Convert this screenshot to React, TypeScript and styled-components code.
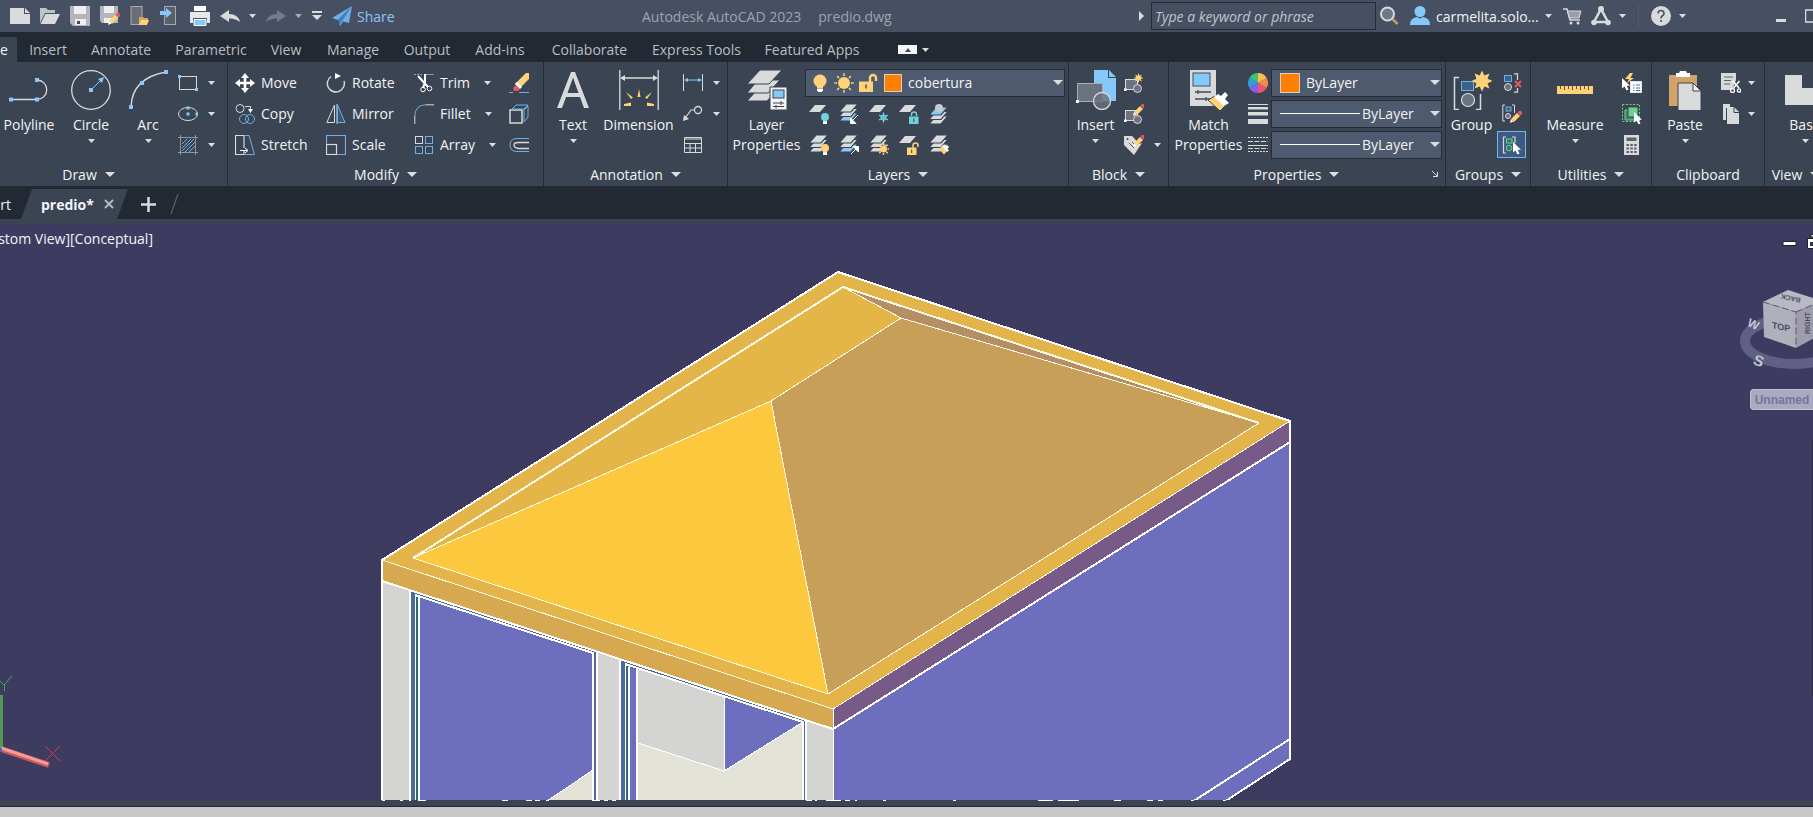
import React from "react";
import styled, { createGlobalStyle, css } from "styled-components";

const c = {
  title: "#475063",
  dark: "#222932",
  panel: "#3b4453",
  field: "#4e5a6e",
  line: "#252c37",
  text: "#f2f3f5",
  muted: "#b9bdc4",
  grey: "#d9dadc",
  blue: "#85c9fb",
  edge: "#6fb0e4",
  yellow: "#ffd27a",
  teal: "#6fd3dc",
  red: "#e8575f",
  green: "#6fd08f",
  canvas: "#3d3c60",
};

const GlobalStyle = createGlobalStyle`
  * { box-sizing: border-box; }
  body { margin: 0; background: ${c.canvas}; }
  body, button, input, select { font-family: "Open Sans", "Noto Sans", sans-serif; font-size: 14px; }
  button { border: 0; padding: 0; background: none; color: inherit; cursor: pointer; }
  svg { display: block; flex: none; }
`;

const Page = styled.div`
  display: flex;
  flex-direction: column;
  min-height: 100vh;
  overflow: hidden;
  color: ${c.text};
`;

/* ---------- title bar ---------- */

const TitleBar = styled.header`
  display: flex;
  align-items: center;
  height: 32px;
  background: ${c.title};
`;
const QuickAccess = styled.div`
  display: flex;
  align-items: center;
  gap: 10px;
  padding-left: 10px;
`;
const IconButton = styled.button`
  display: flex;
  align-items: center;
  justify-content: center;
  flex: none;
`;
const SplitIcon = styled.div`
  display: flex;
  align-items: center;
  gap: 9px;
`;
const ShareButton = styled.button`
  display: flex;
  align-items: center;
  gap: 5px;
  color: #8cc6f2;
`;
const WindowTitle = styled.div`
  flex: 1;
  display: flex;
  justify-content: center;
  gap: 17px;
  white-space: nowrap;
  color: #9ea3ae;
`;
const TitleTools = styled.div`
  display: flex;
  align-items: center;
  flex: none;
`;
const SearchBox = styled.input`
  width: 225px;
  height: 28px;
  margin: 0 4px 0 7px;
  padding: 0 3px;
  border: 1px solid ${c.line};
  background: ${c.title};
  color: ${c.text};
  font-style: italic;
  &::placeholder { color: #c0c4cc; opacity: 1; }
`;
const UserButton = styled.button`
  display: flex;
  align-items: center;
  gap: 6px;
  width: 140px;
  margin: 0 13px 0 10px;
`;
const UserName = styled.span`
  flex: 1;
  text-align: left;
  white-space: nowrap;
`;
const ToolGroup = styled.div`
  display: flex;
  align-items: center;
  gap: 8px;
`;
const Divider = styled.span`
  width: 1px;
  height: 24px;
  margin: 0 12px;
  background: #525b6d;
`;
const WindowButtons = styled.div`
  display: flex;
  gap: 18px;
  width: 37px;
  margin-left: 90px;
  overflow: hidden;
`;

/* ---------- ribbon tabs ---------- */

const RibbonTabs = styled.nav`
  display: flex;
  align-items: flex-end;
  height: 30px;
  background: ${c.dark};
  color: ${c.muted};
`;
const RibbonTab = styled.button<{ $w: number; $active?: boolean }>`
  flex: none;
  width: ${(p) => p.$w}px;
  height: 25px;
  white-space: nowrap;
  ${(p) =>
    p.$active &&
    css`
      margin-right: 1px;
      padding-right: 12px;
      background: ${c.panel};
      color: ${c.text};
      text-align: right;
    `}
`;
const RibbonToggle = styled.div`
  display: flex;
  align-items: center;
  gap: 5px;
  height: 25px;
  margin-left: 26px;
`;
const ToggleBox = styled.button`
  display: flex;
  align-items: center;
  justify-content: center;
  width: 19px;
  height: 9px;
  background: #f5f6f7;
`;

/* ---------- ribbon ---------- */

const RibbonBar = styled.div`
  display: flex;
  height: 124px;
  overflow: hidden;
  background: ${c.panel};
`;
const PanelBox = styled.section<{ $w: number }>`
  display: flex;
  flex-direction: column;
  flex: none;
  width: ${(p) => p.$w}px;
  border-right: 1px solid ${c.line};
`;
const PanelBody = styled.div<{ $pad?: number }>`
  display: flex;
  height: 100px;
  padding: 5px 0 0 ${(p) => p.$pad ?? 0}px;
`;
const PanelTitle = styled.div<{ $cut?: number }>`
  display: flex;
  align-items: center;
  justify-content: center;
  gap: 8px;
  height: 24px;
  padding-right: ${(p) => p.$cut ?? 0}px;
`;
const TitleButton = styled.button`
  display: flex;
  align-items: center;
  gap: 8px;
  white-space: nowrap;
`;
const Launcher = styled.button`
  margin-right: 7px;
  padding: 0;
`;
const LaunchTitle = styled(TitleButton)`
  flex: 1;
  justify-content: center;
`;
const BigBox = styled.button<{ $w: number }>`
  display: flex;
  flex-direction: column;
  align-items: center;
  flex: none;
  width: ${(p) => p.$w}px;
  height: 92px;
  padding-top: 3px;
  line-height: 20px;
`;
const BigLabel = styled.span`
  display: block;
  margin: 5px 0 4px;
  white-space: pre;
  text-align: center;
`;
const Column = styled.div<{ $w?: number; $pad?: number }>`
  display: flex;
  flex-direction: column;
  flex: none;
  width: ${(p) => (p.$w ? p.$w + "px" : "auto")};
  padding-left: ${(p) => p.$pad ?? 0}px;
`;
const Row = styled.div<{ $gap?: number }>`
  display: flex;
  align-items: center;
  gap: ${(p) => p.$gap ?? 10}px;
  height: 31px;
`;
const Command = styled.button`
  display: flex;
  align-items: center;
  gap: 6px;
  white-space: nowrap;
`;
const Combo = styled.label<{ $w: number; $tight?: boolean }>`
  display: flex;
  align-items: center;
  gap: ${(p) => (p.$tight ? 4 : 6)}px;
  width: ${(p) => p.$w}px;
  height: 28px;
  padding: 0 1px 0 ${(p) => (p.$tight ? 4 : 8)}px;
  border: 1px solid ${c.line};
  background: ${c.field};
`;
const ComboSelect = styled.select`
  appearance: none;
  flex: 1;
  min-width: 0;
  height: 26px;
  padding: 0;
  border: 0;
  background: transparent;
  color: ${c.text};
`;
const Swatch = styled.span<{ $size: number }>`
  flex: none;
  width: ${(p) => p.$size}px;
  height: ${(p) => p.$size}px;
  margin: 0 ${(p) => 20 - p.$size}px;
  border: 1px solid #d8cfc6;
  background: #ff8000;
`;
const LineSample = styled.span`
  flex: none;
  width: 80px;
  height: 1px;
  margin-right: -4px;
  background: #fff;
`;
const ToggleButton = styled.button`
  display: flex;
  align-items: center;
  justify-content: center;
  width: 29px;
  height: 27px;
  border: 1px solid #73b8f0;
  background: #3e5a80;
`;
const Cell = styled.div`
  display: flex;
  align-items: center;
  justify-content: center;
  width: 29px;
  height: 31px;
`;

/* ---------- file tabs ---------- */

const FileTabs = styled.nav`
  display: flex;
  align-items: flex-end;
  height: 33px;
  background: ${c.dark};
`;
const StartTab = styled.button`
  width: 21px;
  height: 30px;
  padding-right: 10px;
  text-align: right;
`;
const FileTab = styled.div`
  display: flex;
  align-items: center;
  justify-content: space-between;
  width: 107px;
  height: 30px;
  padding: 0 14px 0 20px;
  background: ${c.panel};
  clip-path: polygon(11px 0, 100% 0, calc(100% - 11px) 100%, 0 100%);
  font-weight: 700;
`;
const NewTab = styled(IconButton)`
  gap: 14px;
  height: 30px;
  margin-left: 13px;
`;

/* ---------- drawing area ---------- */

const Strip = styled.div<{ $h: number; $line?: boolean }>`
  height: ${(p) => p.$h}px;
  background: ${c.panel};
  border-bottom: ${(p) => (p.$line ? `1px solid ${c.dark}` : "0")};
`;
const Viewport = styled.main`
  position: relative;
  flex: 1;
  min-height: 320px;
  background: ${c.canvas};
  overflow: hidden;
`;
const Scene = styled.svg`
  position: absolute;
  inset: 0;
  width: 100%;
  height: 100%;
`;
const ViewLabel = styled.button`
  position: absolute;
  top: 4px;
  left: 0;
  display: flex;
  justify-content: flex-end;
  width: 153px;
  line-height: 22px;
  white-space: nowrap;
`;
const Navigation = styled.aside`
  position: absolute;
  top: 10px;
  right: 0;
  display: flex;
  flex-direction: column;
  align-items: flex-end;
  width: 76px;
`;
const NamedView = styled.button`
  width: 63px;
  height: 21px;
  border: 1px solid #c3c2d4;
  border-right: 0;
  border-radius: 4px 0 0 4px;
  background: #aaa9c2;
  color: #77769a;
  font: 700 12px "Liberation Sans", sans-serif;
`;
const Footer = styled.footer`
  height: 10px;
  background: #c8c8c8;
`;

/* ---------- small drawings ---------- */

const Ico = ({ children, s = 20, v = 20 }: { children: React.ReactNode; s?: number; v?: number }) => (
  <svg width={s} height={s} viewBox={`0 0 ${v} ${v}`} fill="none" stroke={c.grey} aria-hidden="true">
    {children}
  </svg>
);
const Caret = ({ w = 7, fill = "#dcdde0" }: { w?: number; fill?: string }) => (
  <svg width={w} height={w === 7 ? 4 : 5} viewBox="0 0 10 5" preserveAspectRatio="none" aria-hidden="true">
    <path d="M0 0H10L5 5Z" fill={fill} />
  </svg>
);
const Node = ({ x, y, s = 4 }: { x: number; y: number; s?: number }) => (
  <rect x={x - s / 2} y={y - s / 2} width={s} height={s} fill={c.blue} stroke="none" />
);
const Pencil = () => (
  <g stroke="none">
    <path d="M8 19l1-4 2.500 2.500z" fill="#fff" />
    <path d="M9 15l6-6 3 3-6 6z" fill={c.yellow} />
    <path d="M15.500 8.500l1.500-1.500q1.500-.5 2.500.5t.5 2.500l-1.500 1.500z" fill={c.red} />
  </g>
);
const Cursor = ({ x = 10, y = 7 }: { x?: number; y?: number }) => (
  <path transform={`translate(${x} ${y})`} d="M0 0V10.500L2.500 8.500 4.500 12.500 6.500 11.500 4.700 7.700H8Z" fill="#fff" stroke="none" />
);
const sun = (cx: number, cy: number, r1: number, r2: number, n: number) =>
  Array.from({ length: n * 2 }, (_, i) => {
    const a = (Math.PI * i) / n;
    const r = i % 2 ? r1 : r2;
    return `${cx + r * Math.sin(a)},${cy - r * Math.cos(a)}`;
  }).join(" ");
const Rays = ({ cx, cy, r1, r2 }: { cx: number; cy: number; r1: number; r2: number }) => (
  <g stroke={c.yellow} strokeWidth="1.500">
    {Array.from({ length: 8 }, (_, i) => {
      const a = (Math.PI * i) / 4;
      return (
        <line key={i} x1={cx + r1 * Math.cos(a)} y1={cy + r1 * Math.sin(a)} x2={cx + r2 * Math.cos(a)} y2={cy + r2 * Math.sin(a)} />
      );
    })}
  </g>
);
const Sheet = ({ y, fill = c.grey }: { y: number; fill?: string }) => (
  <polygon points={`7,${y} 19,${y} 12,${y + 8} 0,${y + 8}`} fill={fill} stroke={c.panel} strokeWidth="1.200" />
);
const Stack = ({ fills = [c.grey, c.grey, c.grey] }: { fills?: string[] }) => (
  <>
    <Sheet y={9} fill={fills[2]} />
    <Sheet y={4.5} fill={fills[1]} />
    <Sheet y={0} fill={fills[0]} />
  </>
);
const OneSheet = () => <polygon points="6,1 17,1 11,8 0,8" fill={c.grey} stroke="none" />;
const Bulb = ({ x, y, fill }: { x: number; y: number; fill: string }) => (
  <g stroke="none">
    <circle cx={x} cy={y} r="4" fill={fill} />
    <rect x={x - 2} y={y + 3} width="4" height="2" fill={fill} />
    <rect x={x - 2} y={y + 4.500} width="4" height="2.500" fill="#fff" />
  </g>
);
const Padlock = ({ fill, open }: { fill: string; open?: boolean }) => (
  <g>
    <path d={open ? "M14 13V10.500a2.500 2.500 0 0 1 5 0V12" : "M12.500 12V10.500a2.500 2.500 0 0 1 5 0V12"} stroke={fill} strokeWidth="1.500" />
    <rect x={open ? 8 : 10} y="12.500" width="9.500" height="7.500" fill={fill} stroke="none" />
    <path d={open ? "M12.700 14.500V18" : "M14.800 14.500V18"} stroke={c.panel} />
  </g>
);
const BlockBase = () => (
  <g fill="#6c727e">
    <rect x="1.500" y="6.500" width="12" height="10" />
    <circle cx="13.500" cy="15.500" r="4" />
    <rect x="0" y="15.500" width="2.500" height="2.500" fill="#fff" stroke="none" />
  </g>
);
const Scissors = () => (
  <g stroke="#fff" strokeWidth="1.600">
    <path d="M12 7l6 7M18.500 7l-6 7" />
    <circle cx="11.500" cy="16.500" r="2" strokeWidth="1.300" />
    <circle cx="18" cy="16.500" r="1.700" strokeWidth="1.300" />
  </g>
);

const I = {
  newFile: <Ico><path d="M0 2H14V8H20V18H0Z M15 2L20 7H15Z" fill={c.grey} stroke="none" /></Ico>,
  open: <Ico><path d="M0 17V2H6L8 4H15V7H5Z" fill="#bfc2c7" stroke="none" /><path d="M5.500 8H20L15 18H0.500Z" fill={c.grey} stroke="none" /></Ico>,
  save: <Ico><path d="M0 0H20V20H3L0 17Z" fill="#b2b5ba" stroke="none" /><path d="M4 0H16V8H4ZM5 13H16V19H5Z" fill="#eee" stroke="none" /><path d="M7 15h3v3h-3z" fill="#444c5a" stroke="none" /></Ico>,
  saveAs: <Ico><path d="M0 0H18V17H2L0 15Z" fill="#b2b5ba" stroke="none" /><path d="M4 0H14V7H4ZM4 12H12V17H4Z" fill="#eee" stroke="none" /><Pencil /></Ico>,
  openMobile: <Ico><rect x="1" y=".5" width="11" height="18" fill="#6a6e75" stroke="#a8a9ab" /><path d="M9 19V11H13L14 12H18V14Z" fill="#d9a855" stroke="none" /><path d="M11 14H19L17 19H9Z" fill={c.yellow} stroke="none" /></Ico>,
  saveMobile: <Ico><rect x="4.500" y=".5" width="11" height="18" fill="#5a606b" stroke="#a8a9ab" /><path d="M0 5H6V2L12 7L6 12V9H0Z" fill={c.blue} stroke="none" /></Ico>,
  print: <Ico><path d="M4 0H16V5H4Z" fill="#fff" stroke="none" /><path d="M0 6H20V17H17V12H3V17H0Z" fill="#e6e7e9" stroke="none" /><path d="M4 13.500H16V19.500H4Z" fill={c.blue} stroke="#fff" /></Ico>,
  undo: <Ico><path d="M0 10L9 4V8Q18 8 20 16Q15 12 9 12.500V16Z" fill={c.grey} stroke="none" /></Ico>,
  redo: <Ico><path d="M20 10L11 4V8Q2 8 0 16Q5 12 11 12.500V16Z" fill="#747b89" stroke="none" /></Ico>,
  custom: <svg width="10" height="10" viewBox="0 0 10 10" aria-hidden="true"><path d="M0 0H10V2H0ZM0 4H10L5 9Z" fill={c.grey} /></svg>,
  plane: <Ico><path d="M0 12L20 0L6 14Z M7 14.500L20 0L17 17L11 15.500L8 20Z" fill={c.edge} stroke="none" /><path d="M6 14L20 0 7.500 19Z" fill="#3e80b8" stroke="none" /></Ico>,
  search: <Ico><circle cx="7.500" cy="8" r="6.500" strokeWidth="2" fill="#707786" /><path d="M12.500 13l5 5" stroke="#c49a6c" strokeWidth="2.500" /></Ico>,
  person: <Ico><circle cx="10" cy="5.500" r="5.500" fill={c.blue} stroke="none" /><path d="M0 19Q0 12 7 11L10 12.500 13 11Q20 12 20 19Z" fill={c.blue} stroke="none" /></Ico>,
  cart: <Ico><path d="M0 3H4L7 14H17" strokeWidth="1.500" /><path d="M4.500 5H18L16 12H6.500Z" fill="#9a9ea7" /><circle cx="8" cy="17" r="1.500" fill={c.grey} stroke="none" /><circle cx="15" cy="17" r="1.500" fill={c.grey} stroke="none" /></Ico>,
  apps: <Ico><path d="M10 3L17 16H3Z" strokeWidth="2.500" /><g fill={c.grey} stroke="none"><circle cx="10" cy="3" r="3" /><circle cx="3" cy="16.500" r="2.800" /><circle cx="17" cy="16.500" r="2.800" /></g></Ico>,
  help: <Ico><circle cx="10" cy="10" r="10" fill={c.grey} stroke="none" /><path d="M7 7.500Q7 4.500 10 4.500T13 7.500Q13 9 11.500 9.800T10 12.500" stroke="#4b5262" strokeWidth="1.600" /><circle cx="10" cy="15" r="1.100" fill="#4b5262" stroke="none" /></Ico>,

  polyline: <Ico s={40} v={40}><path d="M2 29.500H28A9.700 9.700 0 0 0 28 10" strokeWidth="1.300" /><Node x={2} y={29.5} /><Node x={28} y={29.5} /><Node x={28} y={10} /></Ico>,
  circle: <Ico s={40} v={40}><circle cx="20" cy="20" r="19.300" strokeWidth="1.300" /><path d="M20 20L31 9" stroke={c.blue} /><path d="M27 9L33 7L31 13Z" fill={c.blue} stroke="none" /><Node x={20} y={20} /></Ico>,
  arc: <Ico s={40} v={40}><path d="M3 37Q4 8 38 2" strokeWidth="1.300" /><Node x={3} y={37} /><Node x={14} y={13} /><Node x={38} y={2} /></Ico>,
  rect: <Ico><rect x="1.500" y="3.500" width="17" height="13" /><Node x={1.5} y={3.5} s={3} /><Node x={18.5} y={16.5} s={3} /></Ico>,
  ellipse: <Ico><ellipse cx="10" cy="10" rx="9.500" ry="6.500" /><Node x={10} y={4} s={3} /><Node x={10} y={10} s={3} /><Node x={19} y={10} s={3} /></Ico>,
  hatch: <Ico><path d="M2.500 0V20M17.500 0V20M0 2.500H20M0 17.500H20" stroke="#8f96a1" /><path d="M4 9L9 4M4 13L13 4M4 16L16 4M7 17L17 7M11 17L17 11" stroke={c.edge} /></Ico>,
  move: <Ico><path d="M10 0L14 5H11.300V8.700H15V6L20 10L15 14V11.300H11.300V15H14L10 20L6 15H8.700V11.300H5V14L0 10L5 6V8.700H8.700V5H6Z" fill="#fff" stroke="none" /></Ico>,
  copy: <Ico><circle cx="5" cy="4.500" r="4" /><circle cx="9" cy="15" r="4.500" stroke={c.edge} /><circle cx="15" cy="15" r="4.500" stroke={c.edge} /><path d="M10 2.500H15.500V6" /><path d="M13 5H18L15.500 9Z" fill="#fff" stroke="none" /></Ico>,
  stretch: <Ico><path d="M9 15V19.500H.5V.5H9V13" strokeWidth="1.200" /><path d="M10 .5H14L19.500 19.500H10" stroke={c.edge} /><path d="M5 15.500H12M10 13L13 15.500 10 18" stroke="#fff" /></Ico>,
  rotate: <Ico><path d="M5 3.500A8.500 8.500 0 1 0 18 8" strokeWidth="1.400" /><path d="M9 0L15 3L9 6Z" fill="#fff" stroke="none" /></Ico>,
  mirror: <Ico><path d="M8.500 1V18.500H.8ZM11 0V20" /><path d="M11.500 1V18.500H19Z" stroke={c.edge} fill="#36597a" /></Ico>,
  scale: <Ico><path d="M.5 9V.5H19.500V19.500H11" stroke={c.edge} strokeWidth="1.200" /><rect x=".5" y="9.500" width="10" height="10" strokeWidth="1.200" /></Ico>,
  trim: <Ico><path d="M0 1.500H9" stroke={c.edge} strokeDasharray="2 1" /><path d="M10 1.500H20" stroke="#8f96a1" /><path d="M4 3L14 14M11 1V9L9 15" stroke="#fff" strokeWidth="2" /><circle cx="9" cy="16.500" r="2.300" stroke="#fff" /><circle cx="15.500" cy="15.500" r="2.300" stroke="#fff" /></Ico>,
  fillet: <Ico><path d="M.8 20V12" /><path d="M.8 12Q1 1 12 .8" stroke={c.edge} /><path d="M12 .8H20" /></Ico>,
  array: <Ico><rect x="1.500" y="1.500" width="7" height="7" /><g stroke={c.edge}><rect x="11.500" y="1.500" width="7" height="7" /><rect x="1.500" y="11.500" width="7" height="7" /><rect x="11.500" y="11.500" width="7" height="7" /></g></Ico>,
  erase: <Ico><path d="M20 0V6L11 15L6 11L17 0Z" fill={c.yellow} stroke="none" /><path d="M7 12L11 16L9 18H5L4 15Z" fill={c.red} stroke="none" /><path d="M8 9L13 14L11 16L6 11Z" fill="#fff" stroke="none" /><path d="M0 19.500H20" stroke={c.edge} strokeDasharray="4 6 10" /></Ico>,
  explode: <Ico><path d="M1 6H13V19H1Z" strokeWidth="1.500" /><path d="M3 5L7 1H19L15 5ZM15 18L19 13V2L15 6Z" stroke={c.edge} /></Ico>,
  offset: <Ico><path d="M20 3.500H8Q1 3.500 1 10T8 16.500H20" stroke={c.edge} /><path d="M20 7.500H9Q5 7.500 5 10T9 13.500H20" strokeWidth="1.300" /></Ico>,

  text: <Ico s={40} v={40}><path d="M4 38L18 2H22L36 38H31L27 27H13L9 38ZM14.500 23H25.500L20 7.500Z" fill={c.grey} stroke="none" /></Ico>,
  dimension: <Ico s={40} v={40}><path d="M.8 0V40M39.200 0V40M4 8H36" strokeWidth="1.300" /><path d="M1 8L6 5V11ZM39 8L34 5V11Z" fill={c.grey} stroke="none" /><g fill={c.yellow} stroke="none"><path d="M18.500 27L20 19L21.500 27ZM12 29L7 22L14 27.500ZM28 29L33 22L26 27.500ZM5 34L12 32.500V36H5ZM35 34L28 32.500V36H35Z" /></g></Ico>,
  linear: <Ico><path d="M.5 1V18M19.500 1V18" /><path d="M3 7H17" stroke={c.blue} /><path d="M1 7L5 5V9ZM19 7L15 5V9Z" fill={c.blue} stroke="none" /></Ico>,
  leader: <Ico><circle cx="15" cy="6" r="3.500" strokeWidth="1.300" /><path d="M11.500 6H8L3 13" strokeWidth="1.200" /><path d="M1 11L0 17L6 15Z" fill={c.grey} stroke="none" /></Ico>,
  table: <Ico><path d="M1.500 2.500H18.500V17.500H1.500ZM1.500 4H18.500M1.500 8.500H18.500M1.500 13H18.500M7 8V17M12.500 8V17" /></Ico>,

  layerProps: <Ico s={40} v={40}><g fill={c.grey} stroke={c.panel}><path d="M11 19H31L20 31H0Z" /><path d="M11 10H33L21 23H0Z" /><path d="M13 0H35L22 14H0Z" /></g><path d="M23 17H40V40H23Z" fill="#f2f3f4" stroke={c.panel} /><rect x="26" y="20" width="11" height="8" fill={c.blue} stroke="#444" /><path d="M26 33H37M26 36.500H37M34 31V35M29 35V38.500" stroke="#444" /></Ico>,
  bulb: <Ico><circle cx="10" cy="8" r="6.500" fill={c.yellow} stroke="none" /><rect x="7" y="13" width="6" height="2" fill={c.yellow} stroke="none" /><path d="M7 15.500h6v2l-1.500 1.500h-3l-1.500-1.500z" fill="#fff" stroke="none" /></Ico>,
  sun: <Ico><circle cx="10" cy="10" r="6" fill={c.yellow} stroke="none" /><Rays cx={10} cy={10} r1={7} r2={9.7} /></Ico>,
  unlock: <Ico><path d="M12 9V5a3 3 0 0 1 6 0V8" stroke={c.yellow} strokeWidth="2.400" /><rect x="1" y="8.500" width="14" height="10.500" fill={c.yellow} stroke="none" /><path d="M8 11.500V15.500" stroke="#5b5544" strokeWidth="1.500" /></Ico>,
  layOff: <Ico><OneSheet /><Bulb x={16} y={13} fill={c.teal} /></Ico>,
  layIso: <Ico><Stack fills={[c.grey, c.grey, c.blue]} /><path d="M19 11L13 17M11.500 14V19.500H17Z" stroke="#fff" fill="#fff" /></Ico>,
  layFreeze: <Ico><OneSheet /><g stroke={c.teal} strokeWidth="1.200"><path d="M14.500 8.500V18.500M10 11L19 16M19 11L10 16" /><circle cx="14.500" cy="13.500" r="2.500" /></g></Ico>,
  layLock: <Ico><OneSheet /><Padlock fill={c.teal} /></Ico>,
  layCurrent: <Ico><g transform="translate(0 3)"><Stack fills={[c.blue, c.grey, c.grey]} /></g><circle cx="10" cy="4" r="4" fill="#c9cacc" stroke="none" /></Ico>,
  layOn: <Ico><Stack /><Bulb x={16} y={13} fill={c.yellow} /></Ico>,
  layUniso: <Ico><Stack fills={[c.grey, c.grey, c.blue]} /><path d="M12 19L18 13M14 11.500H19.500V17Z" stroke="#fff" fill="#fff" /></Ico>,
  layThaw: <Ico><Stack /><circle cx="14.500" cy="14" r="3.500" fill={c.yellow} stroke="none" /><Rays cx={14.5} cy={14} r1={4} r2={6} /></Ico>,
  layUnlock: <Ico><OneSheet /><Padlock fill={c.yellow} open /></Ico>,
  layMatch: <Ico><Stack /><path d="M10 14L13 11L18 16L15 19.500Z" fill={c.yellow} stroke="none" /><path d="M13 11L15 9.500 16.500 11 18 10 20 12 18.500 14 20 15.500 18 17Z" fill="#fff" stroke="none" /></Ico>,

  insert: <Ico s={40} v={40}><path d="M18 0H32V8H40V31H18ZM33 0L40 7H33Z" fill={c.blue} stroke="none" /><rect x="1.500" y="13.500" width="25" height="18" fill="#6c727e" stroke="#a9adb4" /><circle cx="26" cy="31" r="8.500" fill="#6c727e" fillOpacity=".8" strokeWidth="1.300" /><rect x="0" y="30" width="3" height="3" fill="#fff" stroke="none" /></Ico>,
  blockNew: <Ico><BlockBase /><polygon points={sun(14.5, 5, 2.4, 5, 8)} fill={c.yellow} stroke="none" /></Ico>,
  blockEdit: <Ico><BlockBase /><g transform="translate(1 -7)"><Pencil /></g></Ico>,
  blockAttr: <Ico><path d="M0 1H8L10 3 15 9L18 8 10 20 0 10Z" fill={c.grey} stroke="none" /><circle cx="3.500" cy="4" r="1" fill={c.panel} stroke="none" /><path d="M5 8L10 13M8 7L11 10" stroke="#555c69" /><g transform="translate(1 -7)"><Pencil /></g></Ico>,

  match: <Ico s={40} v={40}><path d="M1 0H27V36H1Z" fill={c.grey} stroke="none" /><rect x="4" y="3" width="17" height="13" fill={c.blue} stroke="#444c5a" /><path d="M6 22H22M6 29H22M9 20V24M17 27V31" stroke="#444c5a" strokeWidth="1.300" /><path d="M19 30L26 26L36 36L31 41Z" fill={c.yellow} stroke={c.panel} /><path d="M25 27L29 24 32 26 36 22 39 25 36 29 40 33 35 36Z" fill="#fff" stroke="none" /></Ico>,
  wheel: (
    <Ico>
      {["#f8c24a", "#f58a4b", "#e8576b", "#8a5cf0", "#2f9fd8", "#3fc07f"].map((f, i) => {
        const p = (k: number) => `${10 + 10 * Math.sin((k * Math.PI) / 3)} ${10 - 10 * Math.cos((k * Math.PI) / 3)}`;
        return <path key={f} d={`M10 10L${p(i)}A10 10 0 0 1 ${p(i + 1)}Z`} fill={f} stroke="none" />;
      })}
    </Ico>
  ),
  weight: <Ico><path d="M0 0H20V1H0ZM0 3H20V5.500H0ZM0 8H20V11.500H0ZM0 15H20V20H0Z" fill={c.grey} stroke="none" /></Ico>,
  linetype: <Ico><path d="M0 2.500H20M0 16.500H20" strokeDasharray="2 1" /><path d="M0 6.500H20M0 13.500H20" strokeDasharray="5 1.500" /><path d="M0 10.500H20" /></Ico>,

  group: <Ico s={40} v={40}><path d="M7 7.500H2.500V39.500H7M24 39.500H28.500V24" strokeWidth="1.500" /><rect x="9.500" y="11.500" width="12" height="9" fill="#3c6288" stroke={c.edge} /><circle cx="16" cy="30" r="6.500" fill="#6c727e" strokeWidth="1.200" /><polygon points={sun(30, 11, 6, 10.5, 8)} fill={c.yellow} stroke="none" /></Ico>,
  ungroup: <Ico><rect x="2.500" y="2.500" width="7" height="6" fill="#3c6288" stroke={c.edge} /><circle cx="6" cy="14" r="3.500" fill="#6c727e" /><path d="M12 .8H15.500V7M12 19.200H15.500V15" strokeWidth="1.200" /><path d="M13 8L19 14M19 8L13 14" stroke={c.red} strokeWidth="2" /></Ico>,
  groupEdit: <Ico><path d="M3 1H.8V17H3M10 1H12.500V9" /><rect x="4" y="3" width="5" height="4" fill="#3c6288" stroke={c.edge} /><circle cx="6" cy="12" r="2.500" fill="#6c727e" /><Pencil /></Ico>,
  groupSel: <Ico><path d="M4 2H1.500V18H4M10 2H13V8" strokeWidth="1.200" /><rect x="4.500" y="4" width="5.500" height="4" fill="#2f7d5c" stroke={c.green} /><circle cx="7" cy="13" r="2.800" fill="#2f7d5c" stroke={c.green} /><Cursor x={11} y={7} /></Ico>,

  measure: <Ico s={40} v={40}><path d="M2 16H38V24H2Z" fill={c.yellow} stroke="none" /><path d="M5.500 16V19M9.500 16V20M13.500 16V19M17.500 16V20M21.500 16V19M25.500 16V20M29.500 16V19M33.500 16V20" stroke="#5b5544" /></Ico>,
  quick: <Ico><path d="M8 0L3 6H7L5 10 12 5H8.500L11 0Z" fill={c.yellow} stroke="none" /><Cursor x={0} y={5} /><rect x="8.500" y="8.500" width="11" height="11" fill="#fff" stroke="#e6e7e9" /><path d="M11 12H12.500M14 12H18M11 15H12.500M14 15H18M11 17.500H12.500M14 17.500H18" stroke="#2d74b8" /></Ico>,
  selectAll: <Ico><rect x=".5" y=".5" width="17" height="17" stroke={c.green} strokeDasharray="2 1.500" /><path d="M3 6H13V16H3Z" fill="#3f8a63" stroke={c.green} /><path d="M6 3H16V13H6Z" fill={c.green} stroke={c.panel} /><Cursor x={12} y={8} /></Ico>,
  calc: <Ico><path d="M2 0H17V20H2Z" fill={c.grey} stroke="none" /><path d="M4.500 2.500H14.500V6H4.500Z" fill="#5c626d" stroke="none" /><path d="M4.500 10H15M4.500 13.500H15M4.500 17H15" stroke="#5c626d" strokeWidth="2.200" strokeDasharray="2.500 1.300" /></Ico>,

  paste: <Ico s={40} v={40}><path d="M4 5H32V36H4Z" fill="#d3a26a" stroke="none" /><path d="M11 7V3H14L15 1H21L22 3H25V7Z" fill="#fff" stroke="none" /><path d="M13 13H28L36 21V41H13Z" fill={c.grey} stroke={c.panel} /><path d="M28 13V21H36Z" fill="#f5f5f5" stroke={c.panel} /></Ico>,
  cut: <Ico><path d="M0 0H15V7L11 17H0Z" fill={c.grey} stroke="none" /><path d="M3 4H12M3 7.500H10M3 11H9" stroke="#5c626d" /><g transform="translate(0 1)"><Scissors /></g></Ico>,
  copyClip: <Ico><path d="M2 0H9V4H5V16H2Z" fill={c.grey} stroke="none" /><path d="M6 3H13L18 8V20H6Z" fill={c.grey} stroke="none" /><path d="M13 2.500V8.500H19" stroke={c.panel} /></Ico>,
  base: <Ico s={40} v={40}><path d="M0 5H17V18H40V35H0Z" fill={c.grey} stroke="none" /></Ico>,
};

/* ---------- building blocks ---------- */

const Tool = ({ name, icon }: { name: string; icon: React.ReactNode }) => (
  <IconButton aria-label={name}>{icon}</IconButton>
);
const Drop = ({ name, w, fill }: { name: string; w?: number; fill?: string }) => (
  <IconButton aria-label={name}><Caret w={w} fill={fill} /></IconButton>
);
const Big = ({ icon, label, w, drop }: { icon: React.ReactNode; label: string; w: number; drop?: boolean }) => (
  <BigBox $w={w}>
    {icon}
    <BigLabel>{label}</BigLabel>
    {drop && <Caret />}
  </BigBox>
);
const Cmd = ({ icon, label, drop }: { icon: React.ReactNode; label: string; drop?: boolean }) => (
  <Row $gap={14}>
    <Command>{icon}{label}</Command>
    {drop && <Drop name={`${label} options`} />}
  </Row>
);
const Panel = ({ w, title, cut, pad, plain, children }: {
  w: number; title: string; cut?: number; pad?: number; plain?: boolean; children: React.ReactNode;
}) => (
  <PanelBox $w={w}>
    <PanelBody $pad={pad}>{children}</PanelBody>
    <PanelTitle $cut={cut}>
      {plain ? title : <TitleButton>{title}<Caret w={10} /></TitleButton>}
    </PanelTitle>
  </PanelBox>
);

const House = () => (
  <Scene viewBox="0 224 1813 576" preserveAspectRatio="xMidYMid slice" role="img" aria-label="Building model">
    <g shapeRendering="crispEdges">
      <path d="M833 729L1290 442V759L1224 802H833Z" fill="#6e6ebf" />
      <path d="M383 581L833 729V802H383Z" fill="#d4d4d3" />
      <path d="M410 590L597 651V802H410ZM620 659L806 720V802H620Z" fill="#4a6aa0" />
      <path d="M420 597L593 654V802H420ZM629 667L803 723V802H629Z" fill="#6e6ebf" />
      <path d="M593 770L547 801H593Z" fill="#e2e2d6" />
      <path d="M638 668L724 696V771L638 743Z" fill="#d4d4d3" />
      <path d="M638 743L724 771L803 722V802H638Z" fill="#e2e2d6" />
      <path d="M417 594V802M627 662V802" stroke="#2f6d72" strokeWidth="2" />
      <path d="M382 560L838 272L1290 421L833 709Z" fill="#e2b449" />
      <path d="M382 560L833 709V729L382 581Z" fill="#d6a84f" />
      <path d="M833 709L1290 421V442L833 729Z" fill="#785a88" />
      <path d="M843 287L901 318L771 401L413 558Z" fill="#e4b648" />
      <path d="M843 287L901 318L1259 423Z" fill="#b58e66" />
      <path d="M901 318L1259 423L828 694L771 401Z" fill="#c89f58" />
      <path d="M771 401L828 694L413 558Z" fill="#fbc83e" />
    </g>
    <g fill="none" stroke="#fffbe6" strokeWidth="1" shapeRendering="crispEdges">
      <path d="M382 560L833 709L1290 421M413 558L828 694L1259 423L901 318L843 287M901 318L771 401L413 558M771 401L828 694" />
      <path d="M413 558L843 287L1259 423" strokeWidth="2" />
    </g>
    <g fill="none" stroke="#fff" strokeWidth="2" shapeRendering="crispEdges">
      <path d="M382 802V560L838 272L1290 421V759L1224 802M382 581L833 729L1290 442M1290 739L1192 802" />
      <path d="M833 709V802M724 697V771M547 801L593 770M638 743L724 771L803 722" strokeWidth="1" />
      <path d="M410 590V802M415 595L593 653V802M597 651V802M419 597V802M620 659V802M625 664L803 722V802M806 720V802M629 667V802M637 669V802" />
      <path d="M415.500 595V802M625.500 664V802" strokeWidth="1" />
    </g>
    <path d="M0 695H3V748H0Z" fill="#549a54" />
    <path d="M0 681L4 685L12 676M4.500 685V691" fill="none" stroke="#2fae4e" />
    <path d="M1 749L49 765" stroke="#c8595c" strokeWidth="6" />
    <path d="M1 748L48 764" stroke="#f79b97" strokeWidth="3" />
    <path d="M0 748H2V752H0Z" fill="#3a6ea8" />
    <path d="M45 746L60 761M60 746L45 761" fill="none" stroke="#d23c50" />
    <path d="M1812.500 440V696" stroke="#2b2b48" />
  </Scene>
);

/* Broken white edge where the model meets the bottom of the drawing area. */
const EdgeMarks = () => (
  <svg width="100%" height="1" shapeRendering="crispEdges" aria-hidden="true">
    <path
      d="M382 .5H385M400 .5H403M409 .5H411M418 .5H426M502 .5H508M526 .5H532M535 .5H540M546 .5H549M592 .5H600M604 .5H608M612 .5H616M806 .5H812M815 .5H817M826 .5H841M845 .5H850M855 .5H857M883 .5H886M953 .5H956M1038 .5H1053M1058 .5H1079M1114 .5H1121M1147 .5H1153M1158 .5H1163M1191 .5H1194M1223 .5H1226"
      stroke="#fff"
    />
  </svg>
);

const ViewCube = () => (
  <svg width="76" height="155" viewBox="1737 234 76 155" role="img" aria-label="View cube">
    <g stroke="#22222e" strokeWidth="1" fill="#fff">
      <path d="M1783 241.500H1796V245.500H1783Z" />
      <path d="M1807.500 238.500H1820V248.500H1807.500ZM1810.500 242.500V245.500H1820V242.500Z" fillRule="evenodd" />
      <path d="M1811 234.500H1820V237H1811Z" />
    </g>
    <ellipse cx="1794" cy="341" rx="49" ry="23" fill="none" stroke="#605f84" strokeWidth="10" />
    <path d="M1763 302L1788 290L1822 301L1796 312Z" fill="#b9b9c4" />
    <path d="M1763 302L1796 312V348L1764 337Z" fill="#b0b0bd" />
    <path d="M1796 312L1822 301V334L1796 348Z" fill="#9d9dad" />
    <path d="M1763 302L1796 312V348M1796 312L1822 301" fill="none" stroke="#5b5b6c" strokeDasharray="7 3" />
    <g fill="#4d4d5e" fontFamily="Liberation Sans, sans-serif" fontWeight="700">
      <text transform="translate(1772 328) skewY(12)" fontSize="9" textLength={undefined}>TOP</text>
      <text transform="translate(1801 298) rotate(192)" fontSize="7">BACK</text>
      <text transform="translate(1810 334) rotate(-90)" fontSize="7">RIGHT</text>
    </g>
    <g fill="#c4c4d2" fontFamily="Liberation Sans, sans-serif" fontWeight="700">
      <text transform="rotate(25 1755 324)" x="1748" y="329" fontSize="12">W</text>
      <text transform="rotate(20 1759 360)" x="1754" y="366" fontSize="15">S</text>
    </g>
  </svg>
);

const quickTools: [string, React.ReactNode][] = [
  ["New", I.newFile], ["Open", I.open], ["Save", I.save], ["Save as", I.saveAs],
  ["Open from mobile", I.openMobile], ["Save to mobile", I.saveMobile], ["Plot", I.print],
];
const tabs: [string, number][] = [
  ["Insert", 60], ["Annotate", 86], ["Parametric", 94], ["View", 56], ["Manage", 78],
  ["Output", 70], ["Add-ins", 76], ["Collaborate", 103], ["Express Tools", 111], ["Featured Apps", 120],
];
const layerTools: [string, React.ReactNode][][] = [
  [["Off", I.layOff], ["Isolate", I.layIso], ["Freeze", I.layFreeze], ["Lock", I.layLock], ["Make current", I.layCurrent]],
  [["Turn on", I.layOn], ["Unisolate", I.layUniso], ["Thaw", I.layThaw], ["Unlock", I.layUnlock], ["Match layer", I.layMatch]],
];

export default function App() {
  return (
    <Page>
      <GlobalStyle />
      <TitleBar>
        <QuickAccess>
          {quickTools.map(([n, i]) => <Tool key={n} name={n} icon={i} />)}
          <SplitIcon><Tool name="Undo" icon={I.undo} /><Drop name="Undo history" /></SplitIcon>
          <SplitIcon><Tool name="Redo" icon={I.redo} /><Drop name="Redo history" fill="#a5a9b2" /></SplitIcon>
          <Tool name="Customize" icon={I.custom} />
          <ShareButton>{I.plane}Share</ShareButton>
        </QuickAccess>
        <WindowTitle><span>Autodesk AutoCAD 2023</span><span>predio.dwg</span></WindowTitle>
        <TitleTools>
          <svg width="5" height="10" viewBox="0 0 5 10" aria-hidden="true"><path d="M0 0L5 5L0 10Z" fill={c.grey} /></svg>
          <SearchBox aria-label="Search" placeholder="Type a keyword or phrase" />
          <Tool name="Search" icon={I.search} />
          <UserButton>{I.person}<UserName>carmelita.solo...</UserName><Caret /></UserButton>
          <ToolGroup>
            <Tool name="Store" icon={I.cart} />
            <Tool name="App store" icon={I.apps} />
            <Drop name="App options" />
          </ToolGroup>
          <Divider />
          <ToolGroup><Tool name="Help" icon={I.help} /><Drop name="Help options" /></ToolGroup>
          <WindowButtons>
            <IconButton aria-label="Minimize"><svg width="11" height="14" viewBox="0 0 11 14"><path d="M0 10H10V13H0Z" fill={c.grey} /></svg></IconButton>
            <IconButton aria-label="Maximize"><svg width="14" height="14" viewBox="0 0 14 14"><path d="M.5 1H13V13H.5Z" fill="none" stroke={c.grey} strokeWidth="1.500" /></svg></IconButton>
          </WindowButtons>
        </TitleTools>
      </TitleBar>

      <RibbonTabs>
        <RibbonTab $w={17} $active aria-label="Home">e</RibbonTab>
        {tabs.map(([t, w]) => <RibbonTab key={t} $w={w}>{t}</RibbonTab>)}
        <RibbonToggle>
          <ToggleBox aria-label="Minimize ribbon"><svg width="6" height="4" viewBox="0 0 6 4"><path d="M0 4L3 0L6 4Z" fill="#444c5a" /></svg></ToggleBox>
          <Drop name="Ribbon options" />
        </RibbonToggle>
      </RibbonTabs>

      <RibbonBar>
        <Panel w={228} title="Draw" cut={50}>
          <Big w={58} icon={I.polyline} label="Polyline" />
          <Big w={66} icon={I.circle} label="Circle" drop />
          <Big w={48} icon={I.arc} label="Arc" drop />
          <Column $pad={6}>
            <Row><Tool name="Rectangle" icon={I.rect} /><Drop name="Rectangle options" /></Row>
            <Row><Tool name="Ellipse" icon={I.ellipse} /><Drop name="Ellipse options" /></Row>
            <Row><Tool name="Hatch" icon={I.hatch} /><Drop name="Hatch options" /></Row>
          </Column>
        </Panel>

        <Panel w={316} title="Modify" pad={7}>
          <Column $w={91}>
            <Cmd icon={I.move} label="Move" />
            <Cmd icon={I.copy} label="Copy" />
            <Cmd icon={I.stretch} label="Stretch" />
          </Column>
          <Column $w={88}>
            <Cmd icon={I.rotate} label="Rotate" />
            <Cmd icon={I.mirror} label="Mirror" />
            <Cmd icon={I.scale} label="Scale" />
          </Column>
          <Column $w={95}>
            <Cmd icon={I.trim} label="Trim" drop />
            <Cmd icon={I.fillet} label="Fillet" drop />
            <Cmd icon={I.array} label="Array" drop />
          </Column>
          <Column>
            <Row><Tool name="Erase" icon={I.erase} /></Row>
            <Row><Tool name="Explode" icon={I.explode} /></Row>
            <Row><Tool name="Offset" icon={I.offset} /></Row>
          </Column>
        </Panel>

        <Panel w={184} title="Annotation">
          <Big w={58} icon={I.text} label="Text" drop />
          <Big w={73} icon={I.dimension} label="Dimension" />
          <Column $pad={8}>
            <Row><Tool name="Linear" icon={I.linear} /><Drop name="Linear options" /></Row>
            <Row><Tool name="Leader" icon={I.leader} /><Drop name="Leader options" /></Row>
            <Row><Tool name="Table" icon={I.table} /></Row>
          </Column>
        </Panel>

        <Panel w={341} title="Layers">
          <Big w={77} icon={I.layerProps} label={"Layer\nProperties"} />
          <Column>
            <Row>
              <Combo $w={260} $tight>
                {I.bulb}{I.sun}{I.unlock}<Swatch $size={18} />
                <ComboSelect aria-label="Layer"><option>cobertura</option></ComboSelect>
                <Caret w={10} />
              </Combo>
            </Row>
            {layerTools.map((row, i) => (
              <Column key={i} $pad={4}>
                <Row>{row.map(([n, icon]) => <Tool key={n} name={n} icon={icon} />)}</Row>
              </Column>
            ))}
          </Column>
        </Panel>

        <Panel w={100} title="Block">
          <Big w={53} icon={I.insert} label="Insert" drop />
          <Column $pad={2}>
            <Row><Tool name="Create block" icon={I.blockNew} /></Row>
            <Row><Tool name="Edit block" icon={I.blockEdit} /></Row>
            <Row><Tool name="Edit attributes" icon={I.blockAttr} /><Drop name="Attribute options" /></Row>
          </Column>
        </Panel>

        <PanelBox $w={277}>
          <PanelBody>
            <Big w={79} icon={I.match} label={"Match\nProperties"} />
            <Column>
              <Row $gap={3}>
                {I.wheel}
                <Combo $w={171}><Swatch $size={20} /><ComboSelect aria-label="Color"><option>ByLayer</option></ComboSelect><Caret w={10} /></Combo>
              </Row>
              <Row $gap={3}>
                {I.weight}
                <Combo $w={171}><LineSample /><ComboSelect aria-label="Lineweight"><option>ByLayer</option></ComboSelect><Caret w={10} /></Combo>
              </Row>
              <Row $gap={3}>
                {I.linetype}
                <Combo $w={171}><LineSample /><ComboSelect aria-label="Linetype"><option>ByLayer</option></ComboSelect><Caret w={10} /></Combo>
              </Row>
            </Column>
          </PanelBody>
          <PanelTitle>
            <LaunchTitle>Properties<Caret w={10} /></LaunchTitle>
            <Launcher aria-label="Properties palette">
              <svg width="6" height="6" viewBox="0 0 6 6"><path d="M0 0L5 5M5.500 1V5.500H1" fill="none" stroke={c.grey} /></svg>
            </Launcher>
          </PanelTitle>
        </PanelBox>

        <Panel w={85} title="Groups">
          <Big w={51} icon={I.group} label="Group" />
          <Column>
            <Cell><Tool name="Ungroup" icon={I.ungroup} /></Cell>
            <Cell><Tool name="Edit group" icon={I.groupEdit} /></Cell>
            <Cell><ToggleButton aria-label="Group selection" aria-pressed="true">{I.groupSel}</ToggleButton></Cell>
          </Column>
        </Panel>

        <Panel w={121} title="Utilities">
          <Big w={88} icon={I.measure} label="Measure" drop />
          <Column $pad={3}>
            <Row><Tool name="Quick select" icon={I.quick} /></Row>
            <Row><Tool name="Select all" icon={I.selectAll} /></Row>
            <Row><Tool name="Calculator" icon={I.calc} /></Row>
          </Column>
        </Panel>

        <Panel w={113} title="Clipboard" plain>
          <Big w={66} icon={I.paste} label="Paste" drop />
          <Column $pad={3}>
            <Row $gap={7}><Tool name="Cut" icon={I.cut} /><Drop name="Cut options" /></Row>
            <Row $gap={7}><Tool name="Copy clip" icon={I.copyClip} /><Drop name="Copy options" /></Row>
          </Column>
        </Panel>

        <Panel w={101} title="View" cut={38}>
          <Big w={80} icon={I.base} label="Base" drop />
        </Panel>
      </RibbonBar>

      <FileTabs>
        <StartTab aria-label="Start">rt</StartTab>
        <FileTab>
          predio*
          <IconButton aria-label="Close predio"><svg width="10" height="10" viewBox="0 0 10 10"><path d="M1 1L9 9M9 1L1 9" stroke="#b4b8bf" strokeWidth="2" /></svg></IconButton>
        </FileTab>
        <NewTab aria-label="New drawing">
          <svg width="15" height="15" viewBox="0 0 15 15"><path d="M7.500 0V15M0 7.500H15" stroke={c.grey} strokeWidth="2.500" /></svg>
          <svg width="9" height="20" viewBox="0 0 9 20"><path d="M1 20L8 0" stroke="#555d6a" strokeWidth="1.300" /></svg>
        </NewTab>
      </FileTabs>
      <Strip $h={5} />

      <Viewport>
        <House />
        <ViewLabel>stom View][Conceptual]</ViewLabel>
        <Navigation>
          <ViewCube />
          <NamedView>Unnamed</NamedView>
        </Navigation>
      </Viewport>
      <Strip $h={7} $line><EdgeMarks /></Strip>
      <Footer />
    </Page>
  );
}
